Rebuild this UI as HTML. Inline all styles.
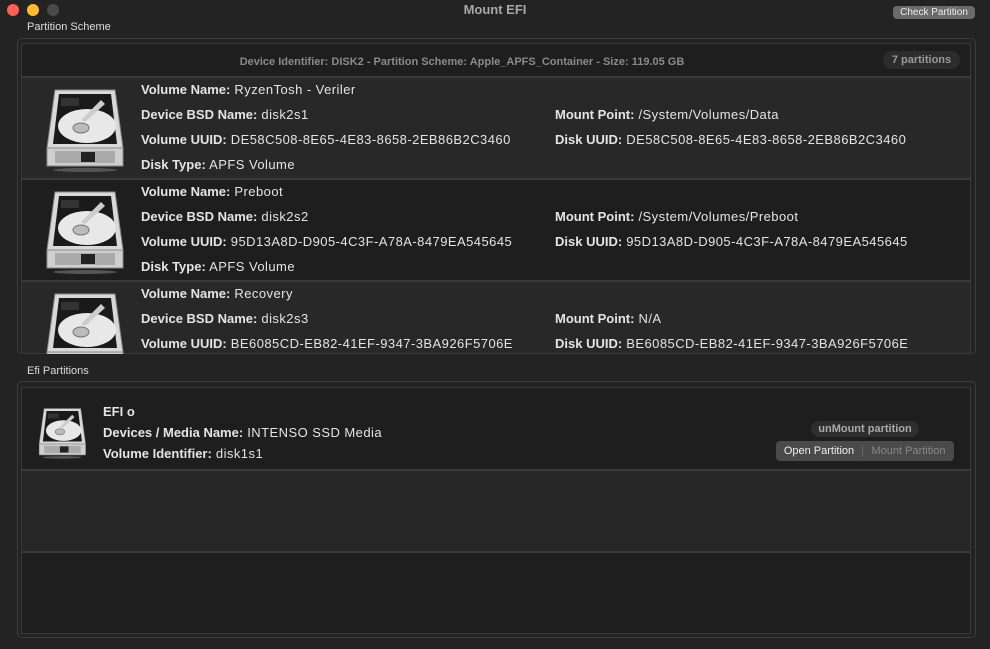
<!DOCTYPE html>
<html><head><meta charset="utf-8"><style>
*{margin:0;padding:0;box-sizing:border-box}
body{width:990px;height:649px;background:#232323;font-family:"Liberation Sans",sans-serif;color:#e4e4e4;position:relative;overflow:hidden;font-size:13px}
.a{position:absolute}
.dot{position:absolute;top:4px;width:12px;height:12px;border-radius:50%}
.box{position:absolute;border:1px solid #3c3c3c;border-radius:5px}
.tbl{position:absolute;border:1px solid #3a3a3a;overflow:hidden}
.row{position:absolute;left:0;right:0;border-bottom:2px solid #3a3a3a}
.t{position:absolute;white-space:nowrap;letter-spacing:0.45px}
.t b{letter-spacing:0}
b{font-weight:bold}
.btn{position:absolute;border-radius:4px;font-size:11px;text-align:center}
</style></head><body>
<div class="dot" style="left:7px;background:#fe5f57"></div>
<div class="dot" style="left:27px;background:#febc2e"></div>
<div class="dot" style="left:47px;background:#4a4a4a"></div>
<div class="a" style="left:0;width:990px;text-align:center;top:2px;font-weight:bold;color:#a8a8a8;font-size:13px">Mount EFI</div>
<div class="btn" style="left:893px;top:6px;width:82px;height:13px;background:#6a6a6a;color:#eee;font-size:10px;line-height:13px">Check Partition</div>
<div class="a" style="left:27px;top:21px;font-size:11px;color:#ddd">Partition Scheme</div>

<div class="box" style="left:17px;top:38px;width:959px;height:316px"></div>
<div class="tbl" style="left:21px;top:43px;width:950px;height:311px;background:#282828">
 <div class="row" style="top:0;height:34px;background:#1e1e1e"></div>
 <div class="a" style="left:0;width:880px;text-align:center;top:12px;font-size:11px;font-weight:bold;color:#8a8a8a">Device Identifier: DISK2 - Partition Scheme: Apple_APFS_Container - Size: 119.05 GB</div>
 <div class="a" style="left:861px;top:7px;width:77px;height:18px;border-radius:9px;background:#2c2c2c;color:#999;font-size:11px;font-weight:bold;text-align:center;line-height:18px">7 partitions</div>
 <div class="row" style="top:34px;height:102px;background:#282828"></div>
 <div class="row" style="top:136px;height:102px;background:#1e1e1e"></div>
 <div class="row" style="top:238px;height:102px;background:#282828;border:none"></div>
</div>

<svg width="0" height="0" style="position:absolute"><defs>
<g id="hdd">
 <path d="M10 4 L70 4 L78 62 L2 62 Z" fill="#d8d8d8" stroke="#888" stroke-width="1"/>
 <path d="M14 8 L66 8 L72 58 L8 58 Z" fill="#1a1a1a"/>
 <ellipse cx="42" cy="40" rx="29" ry="17" fill="#e8e8e8"/>
 <ellipse cx="36" cy="42" rx="8" ry="5" fill="#bbb" stroke="#777"/>
 <rect x="16" y="12" width="18" height="8" fill="#333"/>
 <path d="M56 14 L36 34 L40 36 L60 18 Z" fill="#ccc"/>
 <rect x="2" y="62" width="76" height="18" fill="#cfcfcf" stroke="#888"/>
 <rect x="10" y="65" width="60" height="12" fill="#aaa"/>
 <rect x="36" y="66" width="14" height="10" fill="#222"/>
 <ellipse cx="40" cy="84" rx="32" ry="2" fill="#555"/>
</g></defs></svg>

<svg class="a" style="left:45px;top:86px" width="82" height="88"><use href="#hdd"/></svg>
<svg class="a" style="left:45px;top:188px" width="82" height="88"><use href="#hdd"/></svg>
<svg class="a" style="left:45px;top:290px" width="82" height="64" ><use href="#hdd"/></svg>

<div class="t" style="left:141px;top:82px"><b>Volume Name:</b> RyzenTosh - Veriler</div>
<div class="t" style="left:141px;top:107px"><b>Device BSD Name:</b> disk2s1</div>
<div class="t" style="left:555px;top:107px"><b>Mount Point:</b> /System/Volumes/Data</div>
<div class="t" style="left:141px;top:132px"><b>Volume UUID:</b> DE58C508-8E65-4E83-8658-2EB86B2C3460</div>
<div class="t" style="left:555px;top:132px"><b>Disk UUID:</b> DE58C508-8E65-4E83-8658-2EB86B2C3460</div>
<div class="t" style="left:141px;top:157px"><b>Disk Type:</b> APFS Volume</div>

<div class="t" style="left:141px;top:184px"><b>Volume Name:</b> Preboot</div>
<div class="t" style="left:141px;top:209px"><b>Device BSD Name:</b> disk2s2</div>
<div class="t" style="left:555px;top:209px"><b>Mount Point:</b> /System/Volumes/Preboot</div>
<div class="t" style="left:141px;top:234px"><b>Volume UUID:</b> 95D13A8D-D905-4C3F-A78A-8479EA545645</div>
<div class="t" style="left:555px;top:234px"><b>Disk UUID:</b> 95D13A8D-D905-4C3F-A78A-8479EA545645</div>
<div class="t" style="left:141px;top:259px"><b>Disk Type:</b> APFS Volume</div>

<div class="t" style="left:141px;top:286px"><b>Volume Name:</b> Recovery</div>
<div class="t" style="left:141px;top:311px"><b>Device BSD Name:</b> disk2s3</div>
<div class="t" style="left:555px;top:311px"><b>Mount Point:</b> N/A</div>
<div class="t" style="left:141px;top:336px"><b>Volume UUID:</b> BE6085CD-EB82-41EF-9347-3BA926F5706E</div>
<div class="t" style="left:555px;top:336px"><b>Disk UUID:</b> BE6085CD-EB82-41EF-9347-3BA926F5706E</div>
<div class="a" style="left:17px;top:354px;width:960px;height:8px;background:#232323"></div>

<div class="a" style="left:27px;top:365px;font-size:11px;color:#ddd">Efi Partitions</div>
<div class="box" style="left:17px;top:381px;width:959px;height:257px"></div>
<div class="tbl" style="left:21px;top:387px;width:950px;height:247px;background:#1e1e1e">
 <div class="row" style="top:0;height:83px;background:#1e1e1e"></div>
 <div class="row" style="top:83px;height:82px;background:#262626"></div>
 <div class="row" style="top:165px;height:82px;background:#1e1e1e;border:none"></div>
</div>
<svg class="a" style="left:38px;top:405px" width="50" height="56" viewBox="0 0 82 88"><use href="#hdd"/></svg>
<div class="t" style="left:103px;top:404px"><b>EFI o</b></div>
<div class="t" style="left:103px;top:425px"><b>Devices / Media Name:</b> INTENSO SSD Media</div>
<div class="t" style="left:103px;top:446px"><b>Volume Identifier:</b> disk1s1</div>
<div class="btn" style="left:811px;top:421px;width:108px;height:16px;border-radius:8px;background:#2e2e2e;color:#aaa;font-weight:bold;line-height:16px">unMount partition</div>
<div class="btn" style="left:776px;top:441px;width:178px;height:20px;background:#4a4a4a;line-height:20px">
 <span style="position:absolute;left:0;width:86px;color:#eee">Open Partition</span>
 <span style="position:absolute;left:86px;top:4px;width:1px;height:12px;background:#666"></span>
 <span style="position:absolute;left:87px;width:91px;color:#888">Mount Partition</span>
</div>
</body></html>
